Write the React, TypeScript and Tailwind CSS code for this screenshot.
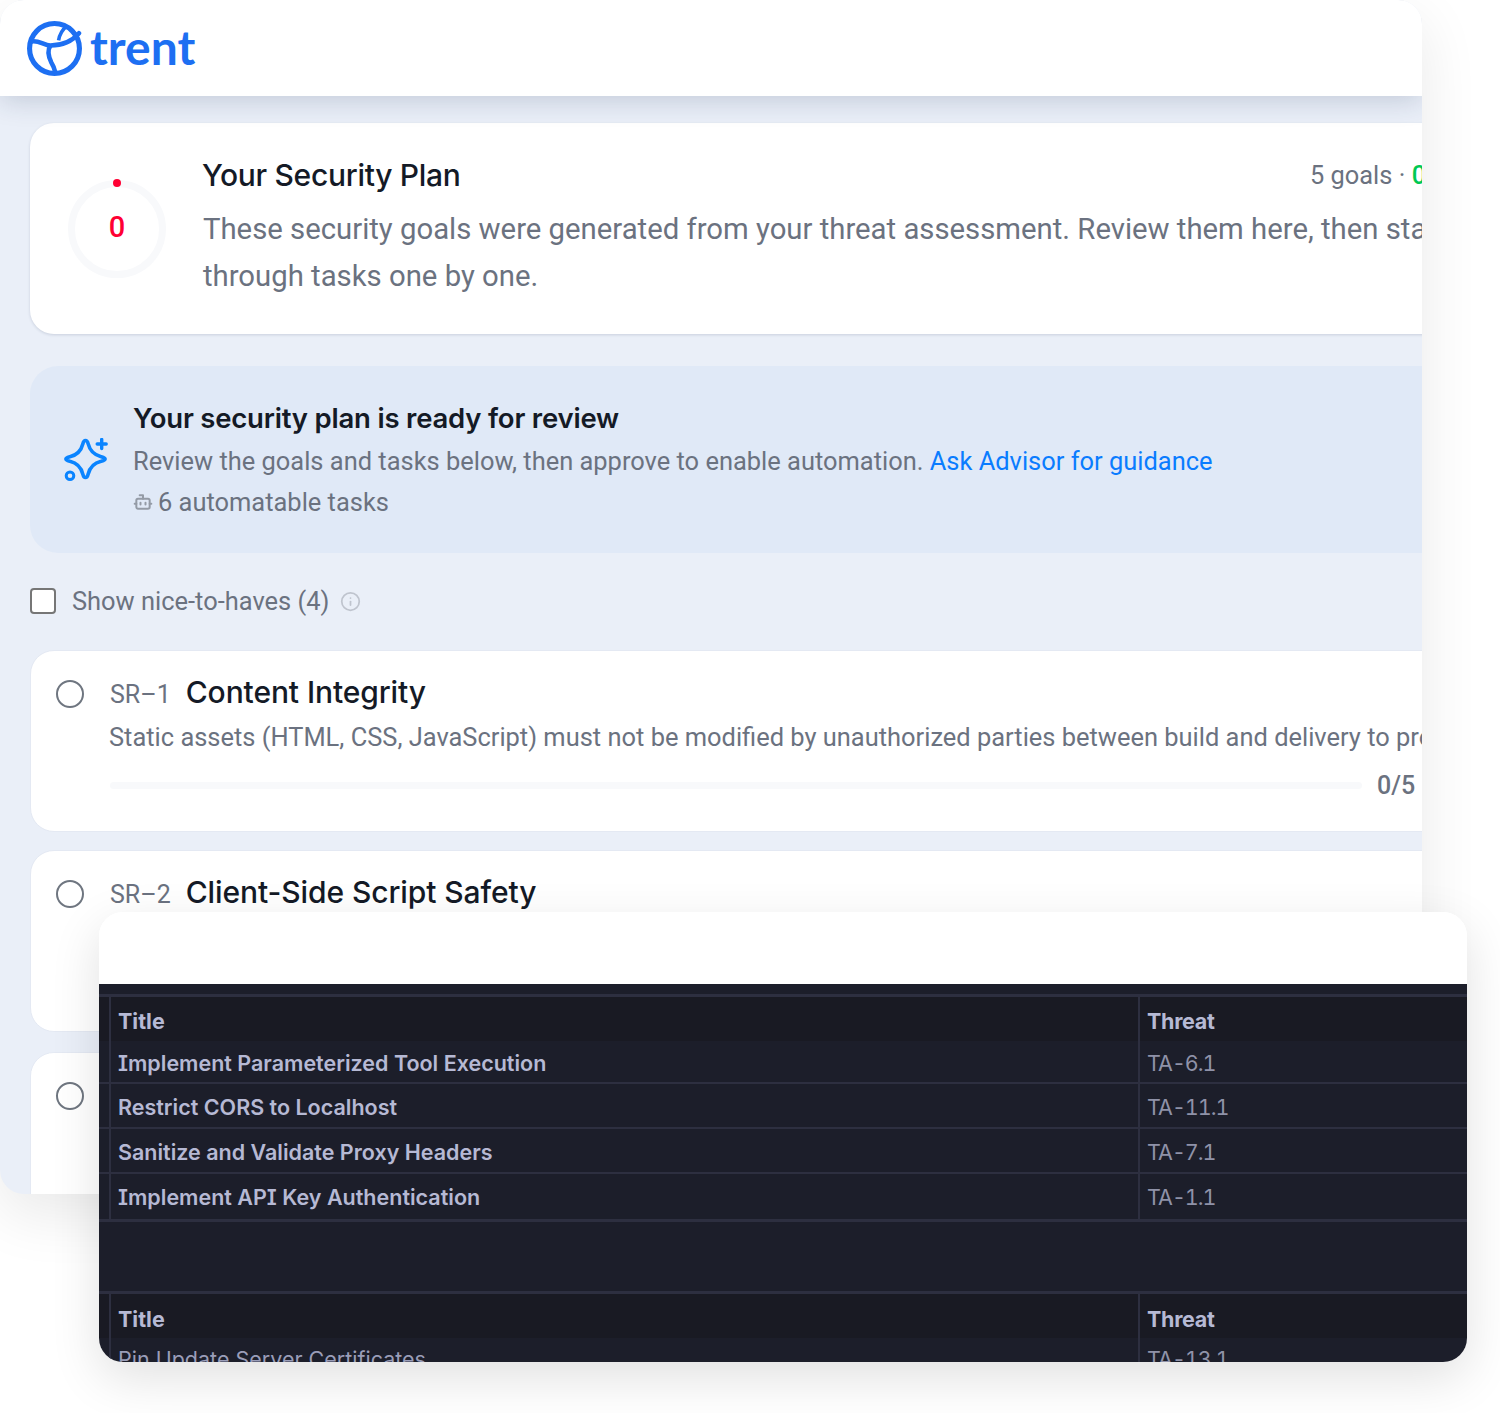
import { Bot, Info } from "lucide-react";

const sans = "font-['Inter',sans-serif]";
const body = "font-['Roboto',sans-serif]";
const plex = "font-['Inter',sans-serif] [font-feature-settings:'cv08']";

function TrentLogo() {
  return (
    <svg width="55" height="55" viewBox="0 0 54 54" fill="none" className="shrink-0">
      <circle cx="27" cy="27" r="24.5" stroke="#1d6ff2" strokeWidth="5" />
      <path d="M5 20c7-1 12 4 18 4 12 0 22-5 28-12" stroke="#1d6ff2" strokeWidth="4.5" strokeLinecap="round" />
      <path d="M31 19c1-6 3-10 8-14" stroke="#1d6ff2" strokeWidth="3.5" />
      <path d="M23 24c-4 6-1 13 1 17 2 3 3 6 4 10" stroke="#1d6ff2" strokeWidth="4.5" />
    </svg>
  );
}

function SparkleIcon() {
  return (
    <svg width="44" height="44" viewBox="0 0 44 44" fill="none" className="shrink-0">
      <path
        d="M21.500 2.500c1.500 0 2.200 1.500 2.600 3.200 1.500 6 4.500 11 13 13 1.500.4 4 1 4 2.300s-2.500 1.900-4 2.300c-8.500 2-11.500 7-13 13-.4 1.700-1.100 3.200-2.600 3.200s-2.200-1.500-2.600-3.200c-1.500-6-4.500-11-13-13-1.500-.4-4-1-4-2.300s2.500-1.900 4-2.300c8.500-2 11.500-7 13-13 .4-1.700 1.100-3.200 2.600-3.200z"
        stroke="#0a84ff"
        strokeWidth="3.6"
        strokeLinejoin="round"
      />
      <path d="M37.700 1.500v9M33.200 6h9" stroke="#0a84ff" strokeWidth="3.4" strokeLinecap="round" />
      <circle cx="6" cy="37.700" r="3.800" fill="#e0e9f7" stroke="#0a84ff" strokeWidth="3" />
    </svg>
  );
}

function ScoreRing() {
  return (
    <div className="relative w-[98px] h-[98px] shrink-0 rounded-full border-[7px] border-[#f8f9fb] flex items-center justify-center">
      <span className="absolute top-[-4px] left-1/2 -translate-x-1/2 -translate-y-1/2 w-2 h-2 rounded-full bg-[#ff0033]" />
      <span className={`${body} text-[29px] font-medium leading-none text-[#ff0033] -mt-1`}>0</span>
    </div>
  );
}

function GoalCard({
  code,
  title,
  description,
  progress,
  className = "",
}: {
  code?: string;
  title?: string;
  description?: string;
  progress?: string;
  className?: string;
}) {
  return (
    <div className={`w-[1440px] h-[182px] shrink-0 rounded-[24px] bg-white border border-[#e4e9f3] flex pl-[25px] pt-[29px] gap-[26px] ${className}`}>
      <div className="w-[28px] h-[28px] shrink-0 rounded-full border-2 border-[#6f7680]" />
      <div className="flex-1 min-w-0">
        {title && (
          <div className="flex items-baseline gap-[15px] h-[26px] -mt-[1px]">
            <span className={`${body} text-[25px] leading-[26px] text-[#6b7280]`}>{code}</span>
            <span className={`${sans} text-[30px] leading-[26px] font-medium text-[#141a26] tracking-[-0.1px]`}>{title}</span>
          </div>
        )}
        {description && (
          <div className={`${body} text-[25.45px] leading-[36px] text-[#6b7280] mt-[14px] -ml-[1px] whitespace-nowrap`}>{description}</div>
        )}
        {progress && (
          <div className="flex items-center mt-[12px]">
            <div className="w-[1252px] h-[7px] rounded-full bg-[#f8f9fb]" />
            <span className={`${body} text-[25px] leading-[36px] font-medium text-[#6b7280] ml-[15px] pt-[1px]`}>{progress}</span>
          </div>
        )}
      </div>
    </div>
  );
}

function TableRow({
  title,
  threat,
  height,
  leading,
  head,
  border,
  clip,
}: {
  title: string;
  threat: string;
  height: string;
  leading: string;
  head?: boolean;
  border?: boolean;
  clip?: boolean;
}) {
  const titleText = head
    ? "font-bold text-[#b6b9d4]"
    : clip
      ? "font-normal text-[#9a9db8]"
      : "font-semibold text-[#b6b9d4]";
  const threatText = head
    ? "font-bold text-[#b6b9d4] tracking-[-0.3px]"
    : "font-normal text-[#8f92a8] tabular-nums tracking-[-1px]";
  return (
    <div className={`flex pl-[10px] ${height} ${head ? "bg-[#191a23]" : ""} ${border ? "border-b-2 border-[#2d2f40]" : ""}`}>
      <div className={`${plex} ${titleText} ${leading} w-[1029px] shrink-0 border-l-2 border-[#2d2f40] pl-[7px] text-[21.5px] whitespace-nowrap`}>
        {title}
      </div>
      <div className={`${plex} ${threatText} ${leading} border-l-2 border-[#2d2f40] pl-[7px] text-[21.5px] whitespace-nowrap flex-1`}>
        {threat}
      </div>
    </div>
  );
}

export default function App() {
  return (
    <div className="relative w-[1500px] h-[1413px] bg-white overflow-hidden">
      {/* back window */}
      <div className="w-[1422px] h-[1194px] rounded-[24px] bg-[#eaeff8] overflow-hidden shadow-[0_20px_60px_rgba(0,0,0,0.09)]">
        <header className="h-[96px] bg-white flex items-center pl-[27px] gap-[8px] relative shadow-[0_4px_26px_rgba(30,50,90,0.2)]">
          <TrentLogo />
          <span className="font-['Lato',sans-serif] text-[48px] font-bold leading-none text-[#1d6ff2] -mt-[3px]">trent</span>
        </header>

        <div className="pl-[30px] pt-[27px] flex flex-col">
          <section className="w-[1440px] h-[211px] shrink-0 rounded-[24px] bg-white shadow-[0_1px_3px_rgba(30,50,90,0.16)] flex pl-[38px] pt-[57px] gap-[37px]">
            <ScoreRing />
            <div className="-mt-[24px] min-w-0 -ml-[1px]">
              <div className="flex items-center h-[38px] whitespace-nowrap">
                <span className={`${sans} w-[1108px] shrink-0 text-[30px] font-medium text-[#141a26] tracking-[-0.3px]`}>Your Security Plan</span>
                <span className={`${body} text-[25.4px] text-[#6b7280]`}>
                  5 goals · <span className="font-medium text-[#00c853]">0 done</span>
                </span>
              </div>
              <p className={`${body} ml-[1px] mt-[12px] text-[29.3px] leading-[47px] text-[#6b7280] whitespace-nowrap`}>
                These security goals were generated from your threat assessment. Review them here, then start working
                <br />
                through tasks one by one.
              </p>
            </div>
          </section>

          <section className="w-[1440px] h-[187px] shrink-0 mt-[32px] rounded-[28px] bg-[#e0e9f7] flex items-center pl-[34px] gap-[25px]">
            <SparkleIcon />
            <div className="pt-[1px]">
              <div className={`${sans} text-[27.5px] leading-[40px] font-semibold text-[#141a26] tracking-[-0.2px]`}>Your security plan is ready for review</div>
              <div className={`${body} mt-[2px] text-[25.45px] leading-[42px] text-[#6b7280]`}>
                Review the goals and tasks below, then approve to enable automation. <span className="text-[#0a7cff]">Ask Advisor for guidance</span>
              </div>
              <div className={`${body} flex items-center gap-[5px] text-[25.45px] leading-[41px] text-[#6b7280]`}>
                <Bot size={20} strokeWidth={2.4} className="text-[#949ba6]" />6 automatable tasks
              </div>
            </div>
          </section>

          <div className="h-[26px] mt-[35px] flex items-center">
            <span className="w-[26px] h-[26px] rounded-[4px] bg-white border-2 border-[#767676]" />
            <span className={`${body} ml-4 text-[25.45px] text-[#6b7280]`}>Show nice-to-haves (4)</span>
            <Info size={21} className="ml-[11px] text-[#bfc4ce]" />
          </div>

          <div className="mt-[36px] flex flex-col gap-[18px]">
            <GoalCard
              code="SR–1"
              title="Content Integrity"
              description="Static assets (HTML, CSS, JavaScript) must not be modified by unauthorized parties between build and delivery to production"
              progress="0/5"
            />
            <GoalCard code="SR–2" title="Client-Side Script Safety" />
            <GoalCard className="mt-[2px]" />
          </div>
        </div>
      </div>

      {/* floating table window */}
      <div className="absolute left-[99px] top-[912px] w-[1368px] h-[450px] rounded-[24px] bg-white overflow-hidden shadow-[0_16px_50px_rgba(0,0,0,0.12)]">
        <div className="h-[72px] bg-white" />
        <div className="h-[378px] bg-[#1c1e2a] overflow-hidden">
          <div className="h-[13px] border-b-[3px] border-[#2d2f40]" />
          <TableRow head height="h-[44px]" leading="leading-[49px]" title="Title" threat="Threat" />
          <TableRow border height="h-[43px]" leading="leading-[44px]" title="Implement Parameterized Tool Execution" threat="TA-6.1" />
          <TableRow border height="h-[45px]" leading="leading-[46px]" title="Restrict CORS to Localhost" threat="TA-11.1" />
          <TableRow border height="h-[45px]" leading="leading-[46px]" title="Sanitize and Validate Proxy Headers" threat="TA-7.1" />
          <TableRow height="h-[45px]" leading="leading-[46px]" title="Implement API Key Authentication" threat="TA-1.1" />
          <div className="h-[75px] border-y-[3px] border-[#2d2f40]" />
          <TableRow head height="h-[44px]" leading="leading-[50px]" title="Title" threat="Threat" />
          <TableRow clip height="h-[45px]" leading="leading-[42px]" title="Pin Update Server Certificates" threat="TA-13.1" />
        </div>
      </div>
    </div>
  );
}
